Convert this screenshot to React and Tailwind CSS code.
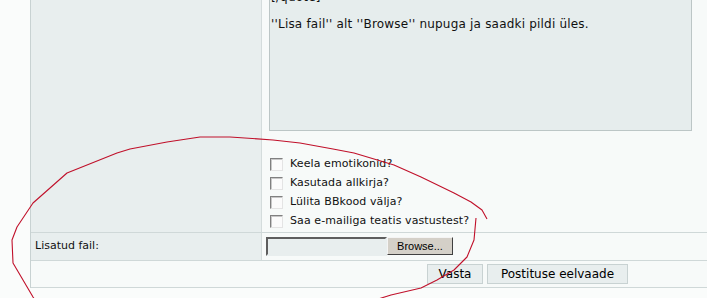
const options = [
  "Keela emotikonid?",
  "Kasutada allkirja?",
  "Lülita BBkood välja?",
  "Saa e-mailiga teatis vastustest?",
];

const arcPoints =
  "487,219 482,210 471,202 454,193 421,177 394,165 354,153 333,149 300,143 273,140 230,137 200,137 167,142 130,149 117,153 67,173 33,203 17,227 12,240 13,263 23,280 33,297 35,300";
const tailPoints =
  "476,218 474,240 467,257 454,270 437,280 421,288 391,295 375,300";

const Checkbox = () => (
  <span className="inline-block w-[13px] h-[13px] border border-t-[#808080] border-l-[#808080] border-b-[#e4e4e4] border-r-[#e4e4e4] bg-[#fbfbfb] shadow-[inset_1px_1px_0_#c8c8c8]" />
);

const App = () => {
  return (
    <div className="relative w-full h-[298px] overflow-hidden bg-[#fafcfb] font-['DejaVu_Sans',Verdana,sans-serif] text-[11px] text-[#111]">
      <div className="ml-[30px] -mt-[69px] w-[994px] border-l border-[#c8d2d2]">
        {/* message + options */}
        <div className="grid grid-cols-[231px_1fr] border-b border-[#cfd8d8]">
          <div className="bg-[#e8eeee] border-r border-[#d4dcdc]" />
          <div className="bg-[#f7faf9] pl-[7px] pb-[1px]">
            <div className="w-[423px] h-[200px] border border-[#bcc6c6] bg-[#e6eded] pt-[58px] pl-[1px] leading-[14px] text-[12px] tracking-[0.2px]">
              <div>[/quote]</div>
              <div className="h-[13px]" />
              <div>''Lisa fail'' alt ''Browse'' nupuga ja saadki pildi üles.</div>
            </div>
            <div className="mt-[24px]">
              {options.map((label) => (
                <div key={label} className="flex items-center h-[19px] pl-[1px]">
                  <Checkbox />
                  <span className="ml-[7px] tracking-[0.1px]">{label}</span>
                </div>
              ))}
            </div>
          </div>
        </div>

        {/* attachment */}
        <div className="grid grid-cols-[231px_1fr] h-[28px] border-b border-[#cfd8d8]">
          <div className="bg-[#e8eeee] border-r border-[#d4dcdc] flex items-center pl-[4px]">
            Lisatud fail:
          </div>
          <div className="bg-[#f7faf9] flex items-start pt-[4px] pl-[4px]">
            <div className="w-[121px] h-[19px] border-2 border-t-[#5e5e5e] border-l-[#5e5e5e] border-b-[#e8eeee] border-r-[#e8eeee] bg-[#e8eeee]" />
            <button className="w-[66px] h-[18px] bg-[#d4d0c8] border border-t-[#f4f4f4] border-l-[#f4f4f4] border-b-[#404040] border-r-[#404040] font-['Liberation_Sans',Arial,sans-serif] text-[11px] leading-none text-black">
              Browse...
            </button>
          </div>
        </div>

        {/* actions */}
        <div className="h-[27px] bg-[#f7faf9] border-b border-[#cfd8d8] flex justify-center items-start pt-[3px] gap-[4px]">
          <button className="w-[56px] h-[20px] bg-[#e8eeee] border border-[#c8d2d2] text-[12px] leading-none text-black">
            Vasta
          </button>
          <button className="w-[141px] h-[20px] bg-[#e8eeee] border border-[#c8d2d2] text-[12px] leading-none text-black">
            Postituse eelvaade
          </button>
        </div>
      </div>

      {/* hand drawn annotation */}
      <svg className="absolute inset-0 pointer-events-none" width="707" height="298" viewBox="0 0 707 298">
        <polyline points={arcPoints} fill="none" stroke="#c0102a" strokeWidth="1.1" strokeLinejoin="round" />
        <polyline points={tailPoints} fill="none" stroke="#c0102a" strokeWidth="1.1" strokeLinejoin="round" />
      </svg>
    </div>
  );
};

export default App;
